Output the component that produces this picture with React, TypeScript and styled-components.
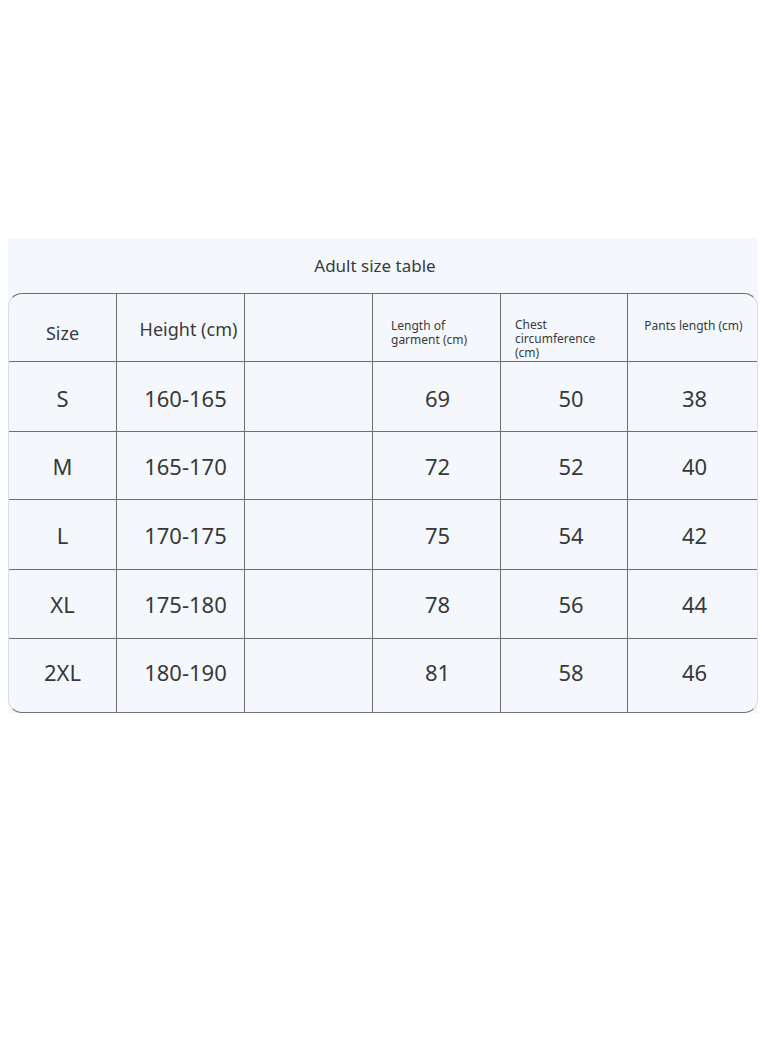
import React from "react";
import styled, { createGlobalStyle } from "styled-components";

const Global = createGlobalStyle`
  html, body { margin: 0; padding: 0; background: #ffffff; }
  body { font-family: "Noto Sans", "Open Sans", sans-serif; color: #353535; }
`;

const Page = styled.div`
  width: 762px;
  height: 1039px;
  padding-top: 238px;
  padding-left: 8px;
  box-sizing: border-box;
`;

const Panel = styled.section`
  width: 750px;
  height: 475px;
  background: #f4f8fc;
  display: flex;
  flex-direction: column;
`;

const Title = styled.h1`
  margin: 0;
  height: 55px;
  display: flex;
  align-items: center;
  justify-content: center;
  padding-right: 16px;
  font-size: 17px;
  font-weight: 400;
  color: #3a3a3a;
`;

const Table = styled.div`
  width: 750px;
  display: grid;
  grid-template-columns: 108px 128px 128px 128px 127px 131px;
  grid-template-rows: 68px 70px 68px 70px 69px 73px;
  border-top: 1.5px solid #6f6f6f;
  border-bottom: 1.5px solid #6f6f6f;
  border-left: 1px solid #d8dde3;
  border-right: 1px solid #d8dde3;
  border-radius: 14px;
  box-sizing: border-box;
  overflow: hidden;
`;

const Cell = styled.div<{ $last?: boolean; $lastRow?: boolean; $shift?: number; $drop?: number }>`
  display: flex;
  align-items: center;
  justify-content: center;
  padding-left: ${(p) => (p.$shift ?? 0) * 2}px;
  padding-top: ${(p) => Math.max(0, (p.$drop ?? 0) * 2)}px;
  padding-bottom: ${(p) => Math.max(0, -(p.$drop ?? 0) * 2)}px;
  box-sizing: border-box;
  border-right: ${(p) => (p.$last ? "none" : "1.5px solid #6f6f6f")};
  border-bottom: ${(p) => (p.$lastRow ? "none" : "1.5px solid #6f6f6f")};
  font-size: 22px;
  color: #383838;
`;

const HeadCell = styled(Cell)<{ $align?: "left" | "center"; $top?: number }>`
  justify-content: ${(p) => (p.$align === "left" ? "flex-start" : "center")};
  align-items: flex-start;
  padding-top: ${(p) => p.$top ?? 0}px;
`;

const HeadBig = styled.span<{ $size: number }>`
  font-size: ${(p) => p.$size}px;
  line-height: 1.2;
  color: #3a3a3a;
`;

const HeadSmall = styled.span`
  font-size: 12px;
  line-height: 14px;
  color: #3a3a3a;
  display: block;
  white-space: nowrap;
`;

const rows = [
  ["S", "160-165", "69", "50", "38"],
  ["M", "165-170", "72", "52", "40"],
  ["L", "170-175", "75", "54", "42"],
  ["XL", "175-180", "78", "56", "44"],
  ["2XL", "180-190", "81", "58", "46"],
];

const drops = [1, 0, 0, 0, -4];
const shifts = [0, 5, 0, 1, 7, 1];

export default function App() {
  return (
    <>
      <Global />
      <Page>
        <Panel>
          <Title>Adult size table</Title>
          <Table>
            <HeadCell $top={29}>
              <HeadBig $size={18}>Size</HeadBig>
            </HeadCell>
            <HeadCell $top={25} $shift={8}>
              <HeadBig $size={18}>Height (cm)</HeadBig>
            </HeadCell>
            <HeadCell />
            <HeadCell $align="left" $top={25} $shift={9}>
              <div>
                <HeadSmall>Length of</HeadSmall>
                <HeadSmall>garment (cm)</HeadSmall>
              </div>
            </HeadCell>
            <HeadCell $align="left" $top={24} $shift={7}>
              <div>
                <HeadSmall>Chest</HeadSmall>
                <HeadSmall>circumference</HeadSmall>
                <HeadSmall>(cm)</HeadSmall>
              </div>
            </HeadCell>
            <HeadCell $last $top={25} $shift={0}>
              <HeadSmall>Pants length (cm)</HeadSmall>
            </HeadCell>
            {rows.map((r, i) => {
              const lastRow = i === rows.length - 1;
              const drop = drops[i];
              return (
                <React.Fragment key={r[0]}>
                  <Cell $lastRow={lastRow} $drop={drop} $shift={shifts[0]}>{r[0]}</Cell>
                  <Cell $lastRow={lastRow} $drop={drop} $shift={shifts[1]}>{r[1]}</Cell>
                  <Cell $lastRow={lastRow} />
                  <Cell $lastRow={lastRow} $drop={drop} $shift={shifts[3]}>{r[2]}</Cell>
                  <Cell $lastRow={lastRow} $drop={drop} $shift={shifts[4]}>{r[3]}</Cell>
                  <Cell $lastRow={lastRow} $drop={drop} $last $shift={shifts[5]}>{r[4]}</Cell>
                </React.Fragment>
              );
            })}
          </Table>
        </Panel>
      </Page>
    </>
  );
}
